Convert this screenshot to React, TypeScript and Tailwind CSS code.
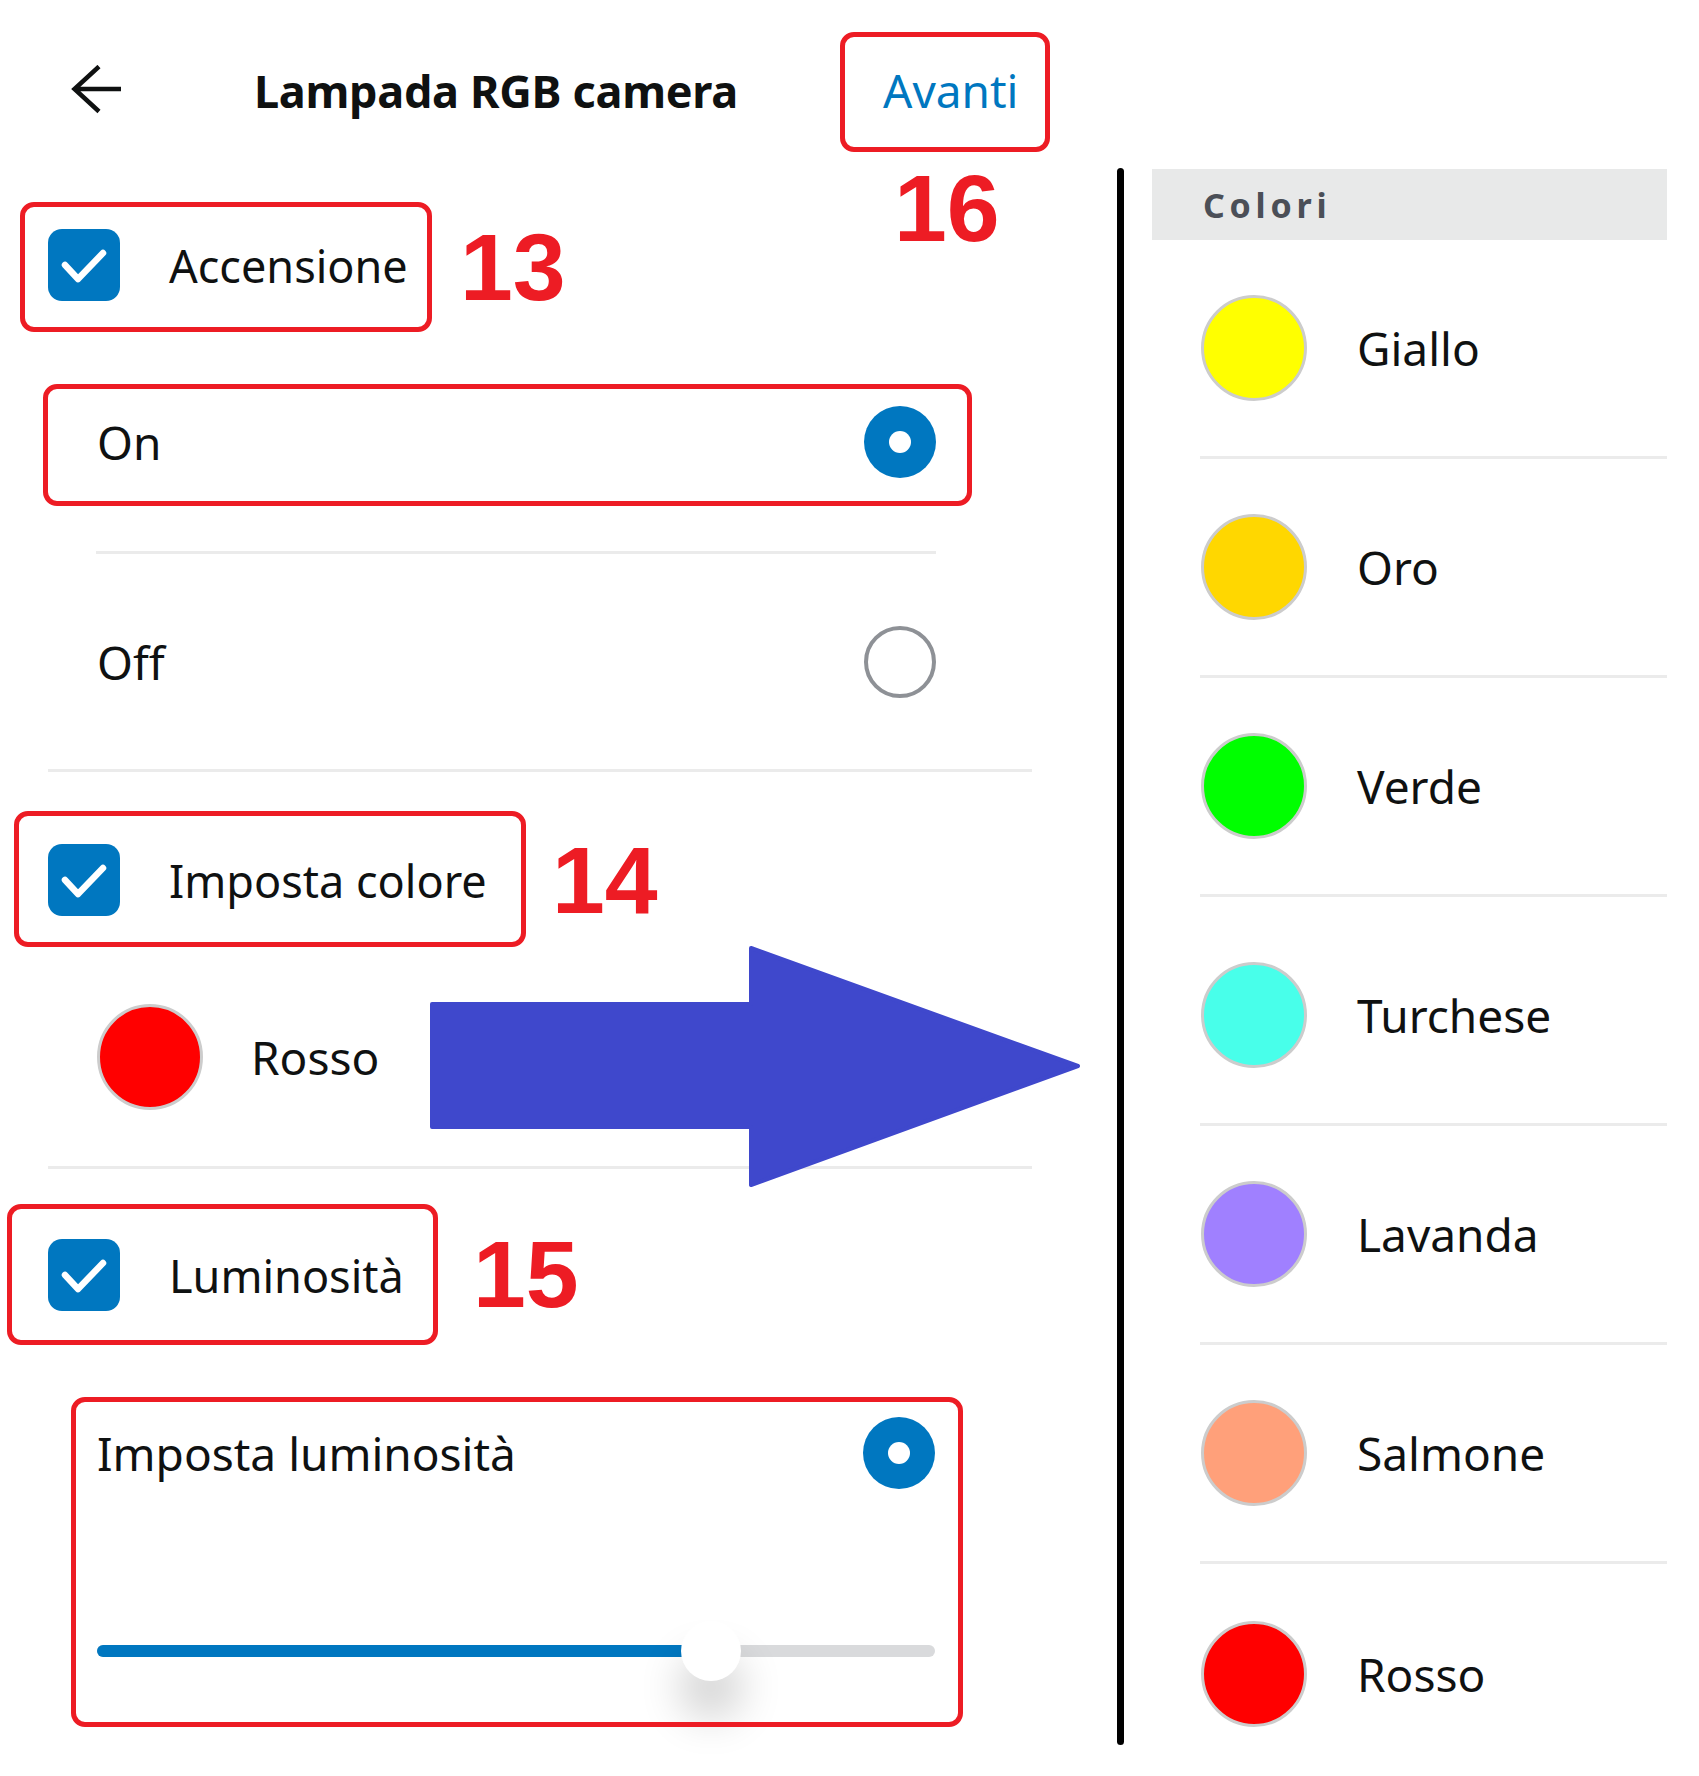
import React from "react";

const FONT = { fontFamily: '"Noto Sans", "Open Sans", sans-serif' };
const NUM = { fontFamily: '"Liberation Sans", Arial, sans-serif' };

function Checkbox() {
  return (
    <div className="flex h-[72px] w-[72px] shrink-0 items-center justify-center rounded-[14px] bg-[#0077c0]">
      <svg width="72" height="72" viewBox="0 0 72 72">
        <path d="M17 36 L30 50 L55 24" fill="none" stroke="#ffffff" strokeWidth="6.5" strokeLinecap="round" strokeLinejoin="round" />
      </svg>
    </div>
  );
}

function RadioOn() {
  return (
    <div className="flex h-[72px] w-[72px] shrink-0 items-center justify-center rounded-full bg-[#0077c0]">
      <div className="h-[22px] w-[22px] rounded-full bg-white" />
    </div>
  );
}

function RadioOff() {
  return <div className="h-[72px] w-[72px] shrink-0 rounded-full border-[4px] border-[#8e9196] bg-white" />;
}

function RedBox({ className }: { className: string }) {
  return <div className={`pointer-events-none absolute rounded-[14px] border-[5px] border-[#ed1c24] ${className}`} />;
}

const colors = [
  { name: "Giallo", c: "bg-[#ffff00]", h: "h-[219px]" },
  { name: "Oro", c: "bg-[#ffd700]", h: "h-[219px]" },
  { name: "Verde", c: "bg-[#00ff00]", h: "h-[219px]" },
  { name: "Turchese", c: "bg-[#48ffea]", h: "h-[229px] pt-[10px]" },
  { name: "Lavanda", c: "bg-[#a080ff]", h: "h-[219px]" },
  { name: "Salmone", c: "bg-[#ffa07a]", h: "h-[219px]" },
  { name: "Rosso", c: "bg-[#ff0000]", h: "h-[219px]" },
];

export default function App() {
  return (
    <div className="flex h-[1776px] w-[1699px] overflow-hidden bg-white text-[#0f1111]" style={FONT}>
      {/* LEFT PANEL */}
      <div className="relative w-[1117px] shrink-0">
        {/* header */}
        <div className="flex h-[180px] items-center">
          <div className="w-[254px] shrink-0 pl-[71px]">
            <svg width="50" height="50" viewBox="0 0 50 50">
              <path d="M50 24 H3 M28 1.5 L3.5 24 L28 46.5" fill="none" stroke="#0f1111" strokeWidth="4.5" />
            </svg>
          </div>
          <div className="w-[629px] shrink-0 whitespace-nowrap text-[45px] font-bold leading-none tracking-[-0.3px]">Lampada RGB camera</div>
          <div className="text-[46px] leading-none text-[#0077c0]">Avanti</div>
        </div>

        {/* Accensione */}
        <div className="flex h-[170px] items-center pl-[48px]">
          <Checkbox />
          <span className="ml-[49px] text-[45px] leading-none">Accensione</span>
        </div>

        {/* On / Off */}
        <div className="ml-[96px] mr-[181px] flex h-[201px] items-center justify-between pb-[18px]">
          <span className="pl-[1px] text-[46px] leading-none">On</span>
          <RadioOn />
        </div>
        <div className="ml-[96px] mr-[181px] h-[3px] bg-[#ebebeb]" />
        <div className="ml-[96px] mr-[181px] flex h-[215px] items-center justify-between">
          <span className="pl-[1px] text-[46px] leading-none">Off</span>
          <RadioOff />
        </div>
        <div className="ml-[48px] w-[984px] h-[3px] bg-[#ebebeb]" />

        {/* Imposta colore */}
        <div className="flex h-[216px] items-center pl-[48px]">
          <Checkbox />
          <span className="ml-[49px] text-[45px] leading-none">Imposta colore</span>
        </div>
        <div className="flex h-[138px] items-center pl-[97px]">
          <div className="h-[106px] w-[106px] shrink-0 rounded-full border-[3px] border-[#cccccc] bg-[#ff0000]" />
          <span className="ml-[48px] text-[46px] leading-none">Rosso</span>
        </div>
        <div className="h-[40px]" />
        <div className="ml-[48px] w-[984px] h-[3px] bg-[#ebebeb]" />

        {/* Luminosita */}
        <div className="flex h-[212px] items-center pl-[48px]">
          <Checkbox />
          <span className="ml-[49px] text-[45px] leading-none">Luminosità</span>
        </div>
        <div className="h-[16px]" />
        <div className="relative ml-[71px] h-[330px] w-[892px] pl-[26px] pr-[28px] pt-[20px]">
          <div className="flex h-[72px] items-center justify-between">
            <span className="text-[46px] leading-none">Imposta luminosità</span>
            <RadioOn />
          </div>
          <div className="relative mt-[132px] h-[60px]">
            <div className="absolute left-0 right-0 top-[24px] h-[12px] rounded-full bg-[#d9dadc]" />
            <div className="absolute left-0 top-[24px] h-[12px] w-[616px] rounded-l-full bg-[#0077c0]" />
            <div className="absolute left-[584px] top-0 h-[60px] w-[60px] rounded-full bg-white shadow-[0_36px_44px_rgba(0,0,0,0.2)]" />
          </div>
          <RedBox className="inset-0" />
        </div>

        {/* annotations */}
        <RedBox className="left-[840px] top-[32px] h-[120px] w-[210px]" />
        <RedBox className="left-[20px] top-[202px] h-[130px] w-[412px]" />
        <RedBox className="left-[43px] top-[384px] h-[122px] w-[929px]" />
        <RedBox className="left-[14px] top-[811px] h-[136px] w-[512px]" />
        <RedBox className="left-[7px] top-[1204px] h-[141px] w-[431px]" />

        <div className="absolute left-[894px] top-[161px] text-[95px] font-bold leading-none text-[#ed1c24]" style={NUM}>16</div>
        <div className="absolute left-[460px] top-[220px] text-[95px] font-bold leading-none text-[#ed1c24]" style={NUM}>13</div>
        <div className="absolute left-[552px] top-[833px] text-[95px] font-bold leading-none text-[#ed1c24]" style={NUM}>14</div>
        <div className="absolute left-[473px] top-[1227px] text-[95px] font-bold leading-none text-[#ed1c24]" style={NUM}>15</div>

        <svg className="absolute left-[430px] top-[946px]" width="652" height="242" viewBox="0 0 652 242">
          <polygon
            points="2,58 321,58 321,2 648,120 321,239 321,181 2,181"
            fill="#3f48cc"
            stroke="#3f48cc"
            strokeWidth="4"
            strokeLinejoin="round"
          />
        </svg>
      </div>

      {/* divider line */}
      <div className="mt-[168px] h-[1577px] w-[7px] shrink-0 rounded-full bg-black" />

      {/* RIGHT PANEL */}
      <div className="ml-[28px] w-[515px] shrink-0 pt-[169px]">
        <div className="flex h-[71px] items-center bg-[#e8e9e9] pl-[51px] text-[34px] font-bold leading-none tracking-[0.14em] text-[#4b4f57]">
          Colori
        </div>
        <div className="pl-[48px]">
          {colors.map((c, i) => (
            <div
              key={c.name}
              className={`flex items-center ${c.h} ${i < colors.length - 1 ? "border-b-[3px] border-[#ebebeb]" : ""}`}
            >
              <div className={`ml-[1px] h-[106px] w-[106px] shrink-0 rounded-full border-[3px] border-[#cccccc] ${c.c}`} />
              <span className="ml-[50px] text-[46px] leading-none">{c.name}</span>
            </div>
          ))}
        </div>
      </div>
    </div>
  );
}
